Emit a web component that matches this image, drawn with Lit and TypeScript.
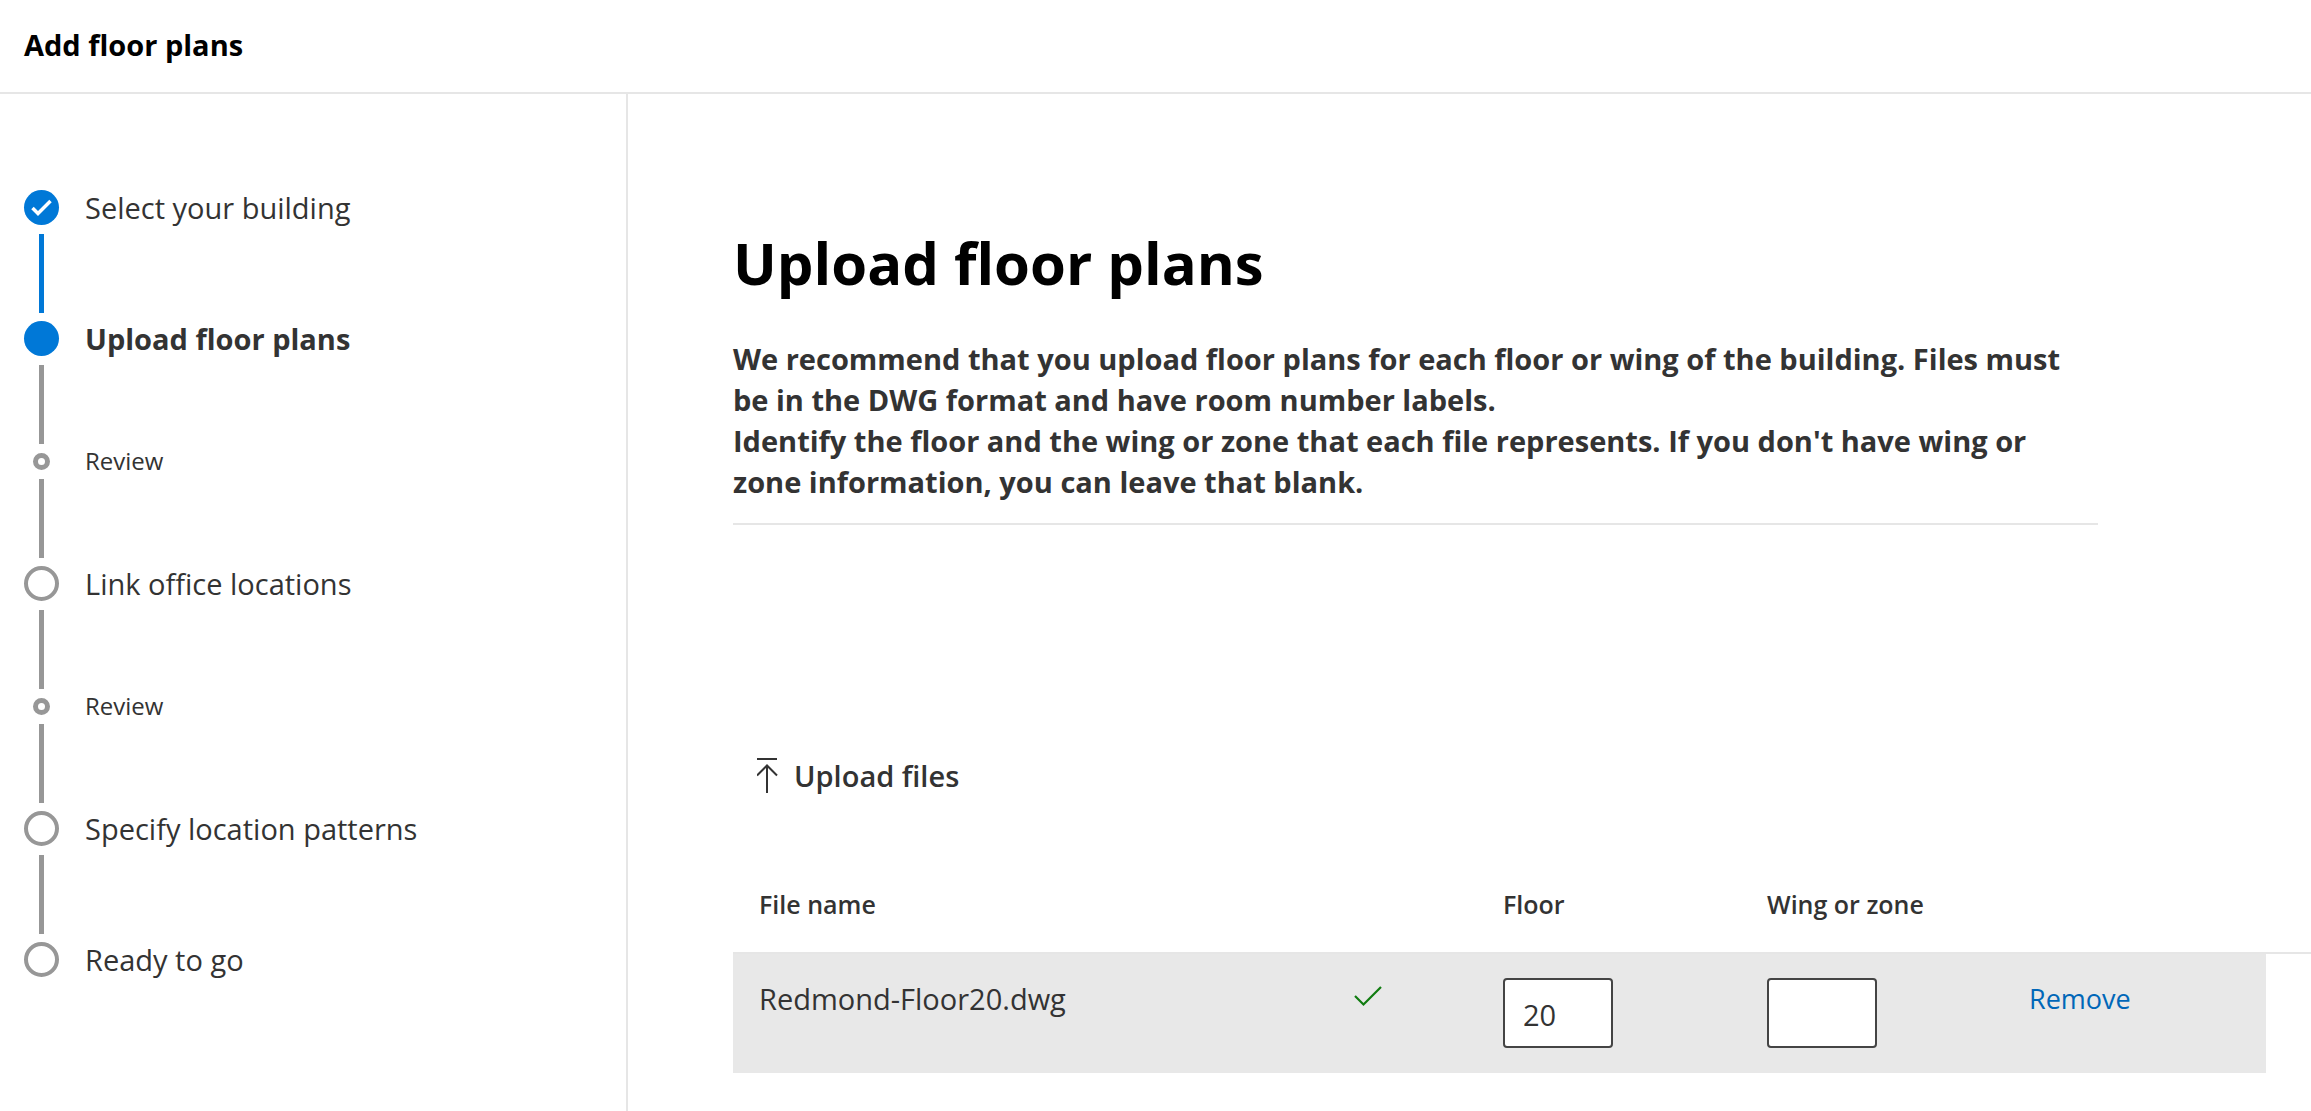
import { LitElement, html, css, nothing } from "lit";
import { customElement, property, state } from "lit/decorators.js";
import { classMap } from "lit/directives/class-map.js";

type StepState = "done" | "current" | "todo";

interface Step {
  label: string;
  state: StepState;
  minor?: boolean;
}

interface PlanFile {
  name: string;
  floor: string;
  wing: string;
}

@customElement("wizard-steps")
export class WizardSteps extends LitElement {
  static styles = css`
    :host {
      display: block;
    }
    .steps {
      list-style: none;
      margin: 0;
      padding: 0;
    }
    .head {
      display: flex;
      align-items: center;
      gap: 26px;
      height: 35px;
      font-size: 29px;
      line-height: 35px;
      white-space: nowrap;
    }
    .minor .head {
      height: 18px;
      font-size: 24px;
      line-height: 18px;
    }
    .current .head {
      font-weight: 700;
    }
    .slot {
      flex: none;
      width: 35px;
      display: flex;
      justify-content: center;
    }
    .dot {
      box-sizing: border-box;
      width: 35px;
      height: 35px;
      border: 4px solid #979797;
      border-radius: 50%;
      display: block;
    }
    .minor .dot {
      width: 17px;
      height: 17px;
      border-width: 5px;
    }
    .done .dot,
    .current .dot {
      border: none;
      background: #0078d7;
    }
    .check {
      display: block;
      width: 35px;
      height: 35px;
    }
    .line {
      width: 5px;
      height: 79px;
      margin: 9px 0 8px 15px;
      background: #979797;
    }
    .done .line {
      background: #0078d7;
    }
  `;

  @property({ attribute: false }) steps: Step[] = [];

  render() {
    const last = this.steps.length - 1;
    return html`
      <ol class="steps">
        ${this.steps.map(
          (step, i) => html`
            <li
              class=${classMap({ [step.state]: true, minor: !!step.minor })}
              aria-current=${step.state === "current" ? "step" : nothing}
            >
              <div class="head">
                <span class="slot">
                  <span class="dot">
                    ${step.state === "done"
                      ? html`<svg class="check" viewBox="0 0 35 35" aria-hidden="true">
                          <path d="M8.500 18l5.500 5.500L26.500 11" fill="none" stroke="#fff" stroke-width="3.500" />
                        </svg>`
                      : nothing}
                  </span>
                </span>
                <span>${step.label}</span>
              </div>
              ${i < last ? html`<div class="line"></div>` : nothing}
            </li>
          `,
        )}
      </ol>
    `;
  }
}

@customElement("plan-table")
export class PlanTable extends LitElement {
  static styles = css`
    :host {
      display: block;
    }
    .table {
      width: 100%;
      border-collapse: separate;
      border-spacing: 0;
      table-layout: fixed;
    }
    .col-status {
      width: 149px;
    }
    .col-floor {
      width: 264px;
    }
    .col-wing {
      width: 262px;
    }
    .col-action {
      width: 237px;
    }
    .col-end {
      width: 45px;
    }
    th {
      padding: 0 0 31px;
      border-bottom: 2px solid #e6e6e6;
      font-size: 25px;
      font-weight: 600;
      line-height: 34px;
      text-align: left;
      white-space: nowrap;
    }
    td {
      padding: 24px 0 25px;
      background: #e8e8e8;
      font-size: 29px;
      line-height: 41px;
      vertical-align: top;
    }
    .name {
      padding-left: 26px;
    }
    td.end {
      background: none;
    }
    .status {
      display: flex;
      align-items: center;
      height: 36px;
    }
    .field {
      display: block;
      box-sizing: border-box;
      width: 110px;
      height: 70px;
      margin: 0;
      padding: 2px 8px 0 18px;
      border: 2px solid #444;
      border-radius: 4px;
      background: #fff;
      color: inherit;
      font: inherit;
    }
    .remove {
      display: block;
      margin: 0;
      padding: 0;
      border: none;
      background: none;
      color: #0067b8;
      font: inherit;
      font-size: 27px;
      line-height: 41px;
      cursor: pointer;
    }
  `;

  @property({ attribute: false }) files: PlanFile[] = [];

  private remove(file: PlanFile) {
    this.dispatchEvent(new CustomEvent("remove-file", { detail: file }));
  }

  render() {
    return html`
      <table class="table">
        <colgroup>
          <col />
          <col class="col-status" />
          <col class="col-floor" />
          <col class="col-wing" />
          <col class="col-action" />
          <col class="col-end" />
        </colgroup>
        <thead>
          <tr>
            <th class="name" scope="col">File name</th>
            <th></th>
            <th id="floor" scope="col">Floor</th>
            <th id="wing" scope="col">Wing or zone</th>
            <th></th>
            <th></th>
          </tr>
        </thead>
        <tbody>
          ${this.files.map(
            (file) => html`
              <tr>
                <td class="name">${file.name}</td>
                <td>
                  <span class="status">
                    <svg width="28" height="21" viewBox="0 0 28 21" aria-hidden="true">
                      <path d="M1 10l8.500 8.500L27 1" fill="none" stroke="#107c10" stroke-width="2.200" />
                    </svg>
                  </span>
                </td>
                <td><input class="field" type="text" aria-labelledby="floor" .value=${file.floor} /></td>
                <td><input class="field" type="text" aria-labelledby="wing" .value=${file.wing} /></td>
                <td><button class="remove" type="button" @click=${() => this.remove(file)}>Remove</button></td>
                <td class="end"></td>
              </tr>
            `,
          )}
        </tbody>
      </table>
    `;
  }
}

@customElement("app-root")
export class AppRoot extends LitElement {
  static styles = css`
    :host {
      display: flex;
      flex-direction: column;
      min-height: 100vh;
      background: #fff;
      color: #333;
      font-family: "Open Sans", "Noto Sans", sans-serif;
      font-size: 29px;
      line-height: 41px;
    }
    .top {
      padding: 24px 24px 27px;
      border-bottom: 2px solid #e6e6e6;
      color: #000;
      font-weight: 700;
    }
    .body {
      flex: 1;
      display: flex;
    }
    .side {
      flex: none;
      box-sizing: border-box;
      width: 628px;
      padding: 96px 24px 24px;
      border-right: 2px solid #e6e6e6;
    }
    .main {
      flex: 1;
      min-width: 0;
      padding: 129px 0 24px 105px;
    }
    .intro {
      max-width: 1365px;
      padding-bottom: 21px;
      border-bottom: 2px solid #e6e6e6;
    }
    .title {
      margin: 0 0 35px;
      color: #000;
      font-size: 58px;
      font-weight: 700;
      line-height: 80px;
    }
    .text {
      margin: 0;
      font-weight: 700;
    }
    .upload {
      display: flex;
      align-items: center;
      gap: 15px;
      margin: 230px 0 91px;
      padding: 0 24px;
      border: none;
      background: none;
      color: inherit;
      font: inherit;
      font-weight: 600;
      cursor: pointer;
    }
  `;

  @state() private files: PlanFile[] = [{ name: "Redmond-Floor20.dwg", floor: "20", wing: "" }];

  private readonly steps: Step[] = [
    { label: "Select your building", state: "done" },
    { label: "Upload floor plans", state: "current" },
    { label: "Review", state: "todo", minor: true },
    { label: "Link office locations", state: "todo" },
    { label: "Review", state: "todo", minor: true },
    { label: "Specify location patterns", state: "todo" },
    { label: "Ready to go", state: "todo" },
  ];

  private onRemove(e: CustomEvent<PlanFile>) {
    this.files = this.files.filter((f) => f !== e.detail);
  }

  render() {
    return html`
      <header class="top">Add floor plans</header>
      <div class="body">
        <nav class="side" aria-label="Steps">
          <wizard-steps .steps=${this.steps}></wizard-steps>
        </nav>
        <main class="main">
          <div class="intro">
            <h1 class="title">Upload floor plans</h1>
            <p class="text">
              We recommend that you upload floor plans for each floor or wing of the building. Files must be in the
              DWG format and have room number labels.
            </p>
            <p class="text">
              Identify the floor and the wing or zone that each file represents. If you don't have wing or zone
              information, you can leave that blank.
            </p>
          </div>
          <button class="upload" type="button">
            <svg width="22" height="35" viewBox="0 0 22 35" aria-hidden="true">
              <path d="M0 1h20M10 35V8M0 17.500L10 7.500l10 10" fill="none" stroke="#333" stroke-width="2" />
            </svg>
            Upload files
          </button>
          <plan-table .files=${this.files} @remove-file=${this.onRemove}></plan-table>
        </main>
      </div>
    `;
  }
}
